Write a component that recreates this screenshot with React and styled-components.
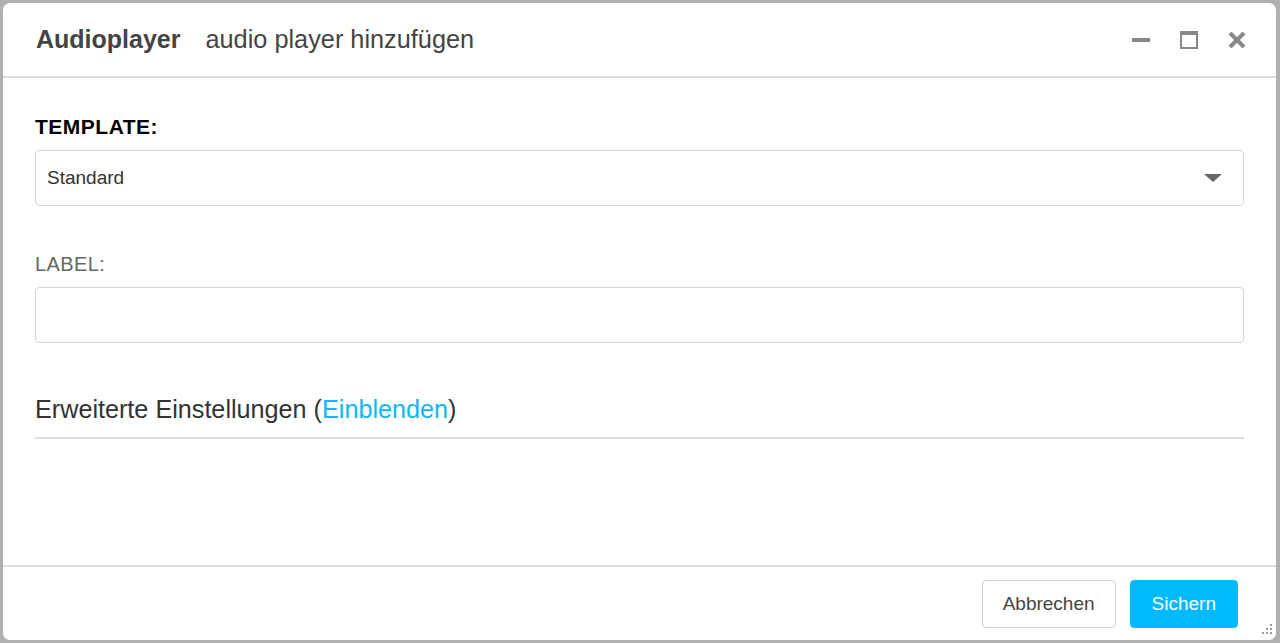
import React from 'react'
import styled, { createGlobalStyle } from 'styled-components'

const GlobalStyle = createGlobalStyle`
    html, body {
        margin: 0;
        padding: 0;
        height: 100%;
        background: #b4b4b4;
        font-family: "Liberation Sans", Arial, Helvetica, sans-serif;
    }
    #root { height: 100%; }
`;

const Backdrop = styled.div`
    height: 643px;
    padding: 3px 4px 3px 3px;
    box-sizing: border-box;
    background: #b0b0b0;
`;

const Dialog = styled.div`
    height: 100%;
    background: #fff;
    border-radius: 7px;
    display: flex;
    flex-direction: column;
    overflow: hidden;
    position: relative;
`;

const Header = styled.div`
    height: 73px;
    flex-shrink: 0;
    display: flex;
    align-items: center;
    padding: 0 29px 0 33px;
    border-bottom: 2px solid #dcdcdc;
`;

const Title = styled.div`
    font-size: 25px;
    font-weight: 700;
    color: #444;
    margin-top: -1px;
`;

const SubTitle = styled.div`
    font-size: 25.3px;
    color: #444;
    margin-left: 25px;
    margin-top: -1px;
    flex: 1;
`;

const WindowButtons = styled.div`
    display: flex;
    align-items: center;
    gap: 28px;
`;

const IconButton = styled.span`
    width: 20px;
    height: 20px;
    display: flex;
    align-items: center;
    justify-content: center;
`;

const Body = styled.div`
    flex: 1;
    padding: 39px 32px 0 32px;
    display: flex;
    flex-direction: column;
`;

const FieldLabel = styled.div`
    font-size: ${p => p.$strong ? '21px' : '20px'};
    font-weight: ${p => p.$strong ? 700 : 400};
    letter-spacing: ${p => p.$strong ? '0.5px' : '0.4px'};
    color: ${p => p.$strong ? '#000' : '#666'};
    height: 20px;
    line-height: 20px;
    margin-bottom: 13px;
`;

const Field = styled.div`
    height: 54px;
    border: 1px solid #d6d6d6;
    border-radius: 4px;
    display: flex;
    align-items: center;
    padding: 0 21px 0 11px;
    margin-bottom: 48px;
    font-size: 19px;
    color: #333;
`;

const FieldText = styled.span`
    flex: 1;
`;

const Caret = styled.span`
    width: 0;
    height: 0;
    border-left: 9px solid transparent;
    border-right: 9px solid transparent;
    border-top: 8px solid #666;
`;

const Advanced = styled.div`
    font-size: 25.2px;
    line-height: 29px;
    color: #333;
    padding: 4px 0 13px 0;
    border-bottom: 2px solid #dcdcdc;
`;

const Link = styled.a`
    color: #0bb8f5;
    text-decoration: none;
`;

const Footer = styled.div`
    height: 75px;
    flex-shrink: 0;
    border-top: 2px solid #dcdcdc;
    display: flex;
    justify-content: flex-end;
    align-items: flex-start;
    padding: 13px 38px 0 0;
    gap: 14px;
    box-sizing: border-box;
`;

const Button = styled.button`
    height: 48px;
    padding: 0 ${p => p.$primary ? '21px' : '20px'};
    font-family: inherit;
    font-size: 19px;
    border-radius: 4px;
    border: 1px solid ${p => p.$primary ? '#00b9ff' : '#d0d0d0'};
    background: ${p => p.$primary ? '#00b9ff' : '#fff'};
    color: ${p => p.$primary ? '#fff' : '#444'};
`;

const Grip = styled.svg`
    position: absolute;
    right: 3px;
    bottom: 3px;
`;

const App = () => {
    return <>
    <GlobalStyle />
    <Backdrop>
        <Dialog>
            <Header>
                <Title>Audioplayer</Title>
                <SubTitle>audio player hinzufügen</SubTitle>
                <WindowButtons>
                    <IconButton>
                        <svg width="20" height="20" viewBox="0 0 20 20">
                            <rect x="1" y="8" width="18" height="4" fill="#888" />
                        </svg>
                    </IconButton>
                    <IconButton>
                        <svg width="20" height="20" viewBox="0 0 20 20">
                            <rect x="2" y="2" width="16" height="16" fill="none" stroke="#888" strokeWidth="2" />
                            <rect x="2" y="2" width="16" height="3" fill="#888" />
                        </svg>
                    </IconButton>
                    <IconButton>
                        <svg width="20" height="20" viewBox="0 0 20 20">
                            <path d="M3 3 L17 17 M17 3 L3 17" stroke="#888" strokeWidth="4" />
                        </svg>
                    </IconButton>
                </WindowButtons>
            </Header>
            <Body>
                <FieldLabel $strong>TEMPLATE:</FieldLabel>
                <Field>
                    <FieldText>Standard</FieldText>
                    <Caret />
                </Field>
                <FieldLabel>LABEL:</FieldLabel>
                <Field />
                <Advanced>Erweiterte Einstellungen (<Link href="#">Einblenden</Link>)</Advanced>
            </Body>
            <Footer>
                <Button>Abbrechen</Button>
                <Button $primary>Sichern</Button>
            </Footer>
            <Grip width="14" height="14" viewBox="0 0 14 14">
                <rect x="11" y="1" width="2" height="2" fill="#999" />
                <rect x="7" y="5" width="2" height="2" fill="#999" />
                <rect x="11" y="5" width="2" height="2" fill="#999" />
                <rect x="3" y="9" width="2" height="2" fill="#999" />
                <rect x="7" y="9" width="2" height="2" fill="#999" />
                <rect x="11" y="9" width="2" height="2" fill="#999" />
            </Grip>
        </Dialog>
    </Backdrop>
    </>
}

export default App;
